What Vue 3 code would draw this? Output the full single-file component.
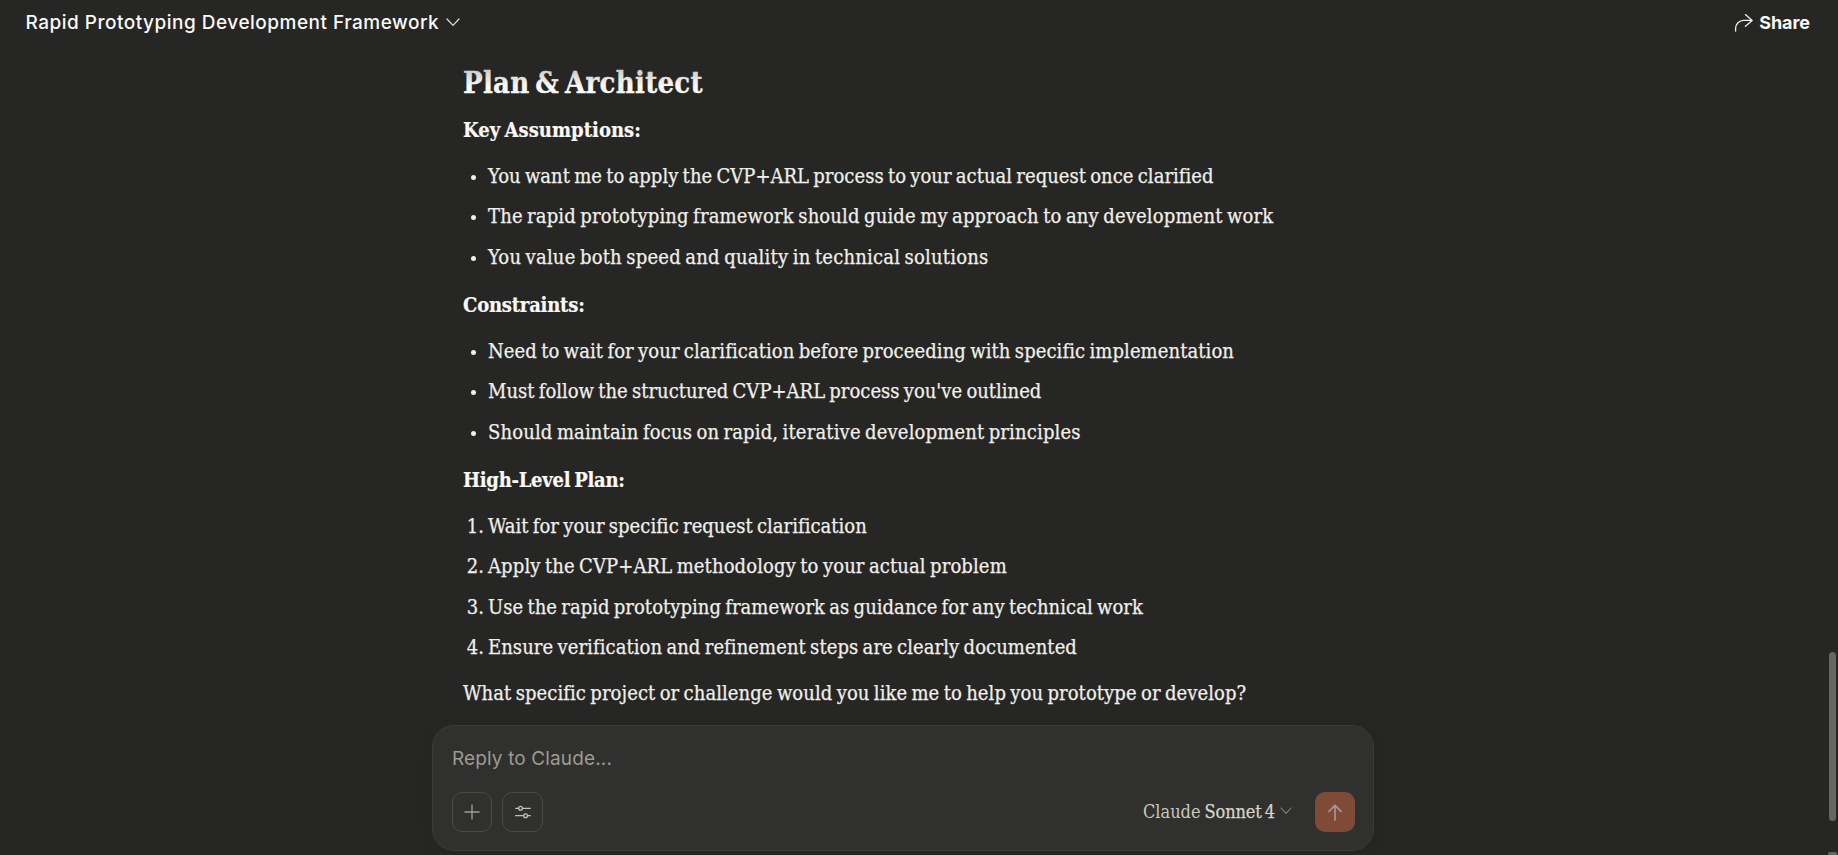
<script setup>
const sections = [
  {
    title: 'Key Assumptions:', tone: 't1', tag: 'ul',
    items: [
      ['You want me to apply the CVP+ARL process to your actual request once clarified', 'k3'],
      ['The rapid prototyping framework should guide my approach to any development work', 'k15'],
      ['You value both speed and quality in technical solutions', 'k20'],
    ],
  },
  {
    title: 'Constraints:', tone: 't2', tag: 'ul',
    items: [
      ['Need to wait for your clarification before proceeding with specific implementation', 'k8'],
      ["Must follow the structured CVP+ARL process you've outlined", 'k0'],
      ['Should maintain focus on rapid, iterative development principles', 'k15'],
    ],
  },
  {
    title: 'High-Level Plan:', tone: 't3', tag: 'ol',
    items: [
      ['Wait for your specific request clarification', 'k3'],
      ['Apply the CVP+ARL methodology to your actual problem', 'k12'],
      ['Use the rapid prototyping framework as guidance for any technical work', 'k4'],
      ['Ensure verification and refinement steps are clearly documented', 'k7'],
    ],
  },
]
</script>

<template>
  <div class="page">
    <header class="top">
      <button class="title">
        <span>Rapid Prototyping Development Framework</span>
        <svg width="14" height="9" viewBox="0 0 14 9"><path d="M1 1l6 6.4L13 1" fill="none" stroke="#dddcd6" stroke-width="1.3" stroke-linecap="round" /></svg>
      </button>
      <button class="share">
        <svg width="20" height="20" viewBox="0 0 20 20" fill="none" stroke="#f2f1ec" stroke-width="1.3" stroke-linecap="round" stroke-linejoin="round">
          <path d="M1.6 18v-2.6a8 8 0 0 1 8-8H18M11.4 1.6l6.8 5.8-6.8 5.9" />
        </svg>
        <span>Share</span>
      </button>
    </header>

    <main class="thread">
      <h2>Plan &amp; Architect</h2>
      <section v-for="s in sections" :key="s.title">
        <h3 :class="s.tone">{{ s.title }}</h3>
        <component :is="s.tag" class="list">
          <li v-for="(item, i) in s.items" :key="i">
            <span class="mark"><template v-if="s.tag === 'ol'">{{ i + 1 }}.</template><i v-else /></span>
            <span class="line" :class="item[1]">{{ item[0] }}</span>
          </li>
        </component>
      </section>
      <p class="ask line k8">What specific project or challenge would you like me to help you prototype or develop?</p>
    </main>

    <div class="composer">
      <div class="placeholder">Reply to Claude...</div>
      <div class="tools">
        <button class="tool">
          <svg width="16" height="16" viewBox="0 0 16 16"><path d="M8 .5v15M.5 8h15" stroke="#9f9d95" stroke-width="1.3" fill="none" /></svg>
        </button>
        <button class="tool">
          <svg width="16" height="14" viewBox="0 0 16 14" fill="none" stroke="#c2c0b6" stroke-width="1.3" stroke-linecap="round">
            <path d="M.7 3.3h2.9M7.4 3.3h7.9M.7 10.7h8M12.5 10.7h2.8" />
            <circle cx="5.5" cy="3.3" r="1.9" /><circle cx="10.6" cy="10.7" r="1.9" />
          </svg>
        </button>
        <button class="model">
          <span>Claude</span><span class="name">Sonnet 4</span>
          <svg width="12" height="8" viewBox="0 0 12 8"><path d="M1 1l5 5.4L11 1" fill="none" stroke="#85837c" stroke-width="1.1" stroke-linecap="round" /></svg>
        </button>
        <button class="send">
          <svg width="14" height="17" viewBox="0 0 14 17" fill="none" stroke="#a6968f" stroke-width="1.7" stroke-linecap="round" stroke-linejoin="round"><path d="M7 16V1.3M1 7.3l6-6 6 6" /></svg>
        </button>
      </div>
    </div>

    <div class="scroll" />
    <div class="scroll-next" />
  </div>
</template>

<style>
body { background: #262624; overflow: hidden; }
</style>

<style scoped>
.page { position: relative; height: 855px; overflow: hidden; background: #262624; color: #faf9f5; font-family: "DejaVu Serif Condensed", "DejaVu Serif", serif; font-size: 20px; }
button { display: flex; align-items: center; margin: 0; padding: 0; border: 0; background: none; color: inherit; font: inherit; white-space: nowrap; }
.top { position: relative; display: flex; justify-content: space-between; align-items: center; box-sizing: border-box; height: 52px; padding: 0 28px 7px 25.5px; font-family: Inter, "Liberation Sans", sans-serif; }
.top::after { content: ""; position: absolute; z-index: 1; left: 0; right: 10px; top: 52px; height: 34px; background: linear-gradient(#262624, rgba(38, 38, 36, 0)); opacity: .45; }
.title { gap: 7px; font-size: 19px; font-weight: 500; letter-spacing: .5px; }
.share { gap: 5px; font-size: 18px; font-weight: 700; letter-spacing: -.05px; }

.thread { box-sizing: border-box; width: 860px; margin-left: 463px; height: 673px; }
h2, h3, p, ul, ol { margin: 0; padding: 0; list-style: none; white-space: nowrap; }
h2 { height: 57.8px; line-height: 62.6px; font-size: 29px; letter-spacing: .27px; word-spacing: -3.5px; -webkit-text-stroke: .3px currentColor; }
section { height: 175px; }
section:last-of-type { height: 213.5px; }
h3 { font-size: 20px; line-height: 40.33px; font-weight: 700; word-spacing: -2px; -webkit-text-stroke: .2px currentColor; }
.t1 { letter-spacing: .04px; }
.t2 { letter-spacing: -.2px; }
.t3 { letter-spacing: -.26px; }
.list { margin-top: 5.8px; color: #f0efea; }
li { display: flex; height: 40.33px; line-height: 40.33px; }
.mark { flex: none; width: 21px; margin-right: 4px; display: flex; align-items: center; justify-content: flex-end; letter-spacing: 0; -webkit-text-stroke: .25px currentColor; }
.mark i { width: 5px; height: 5px; margin: 3px 8.5px 0 0; border-radius: 50%; background: #f0efea; }
.line { word-spacing: -1.5px; -webkit-text-stroke: .25px currentColor; }
.ask { line-height: 40.33px; color: #f0efea; }
.k0 { letter-spacing: .01px; }
.k3 { letter-spacing: .03px; }
.k4 { letter-spacing: .04px; }
.k7 { letter-spacing: .07px; }
.k8 { letter-spacing: .082px; }
.k12 { letter-spacing: .12px; }
.k15 { letter-spacing: .152px; }
.k20 { letter-spacing: .205px; }

.composer { box-sizing: border-box; width: 942px; height: 126px; margin-left: 432px; padding: 18px 18px 0 19px; border: 1px solid #3a3a37; border-radius: 22px; background: #30302e; box-shadow: 0 4px 20px rgba(0, 0, 0, .06); }
.placeholder { height: 48px; font: 400 19px/30px Inter, "Liberation Sans", sans-serif; letter-spacing: .13px; color: #9c9a92; }
.tools { display: flex; align-items: center; }
.tool { box-sizing: border-box; width: 40px; height: 40px; margin-right: 10px; justify-content: center; border: 1px solid #4a4a47; border-radius: 10px; }
.tool + .tool { width: 41px; }
.model { margin-left: auto; padding-bottom: 2px; font-size: 18px; color: #c9c7bf; }
.name { margin: 0 5px 0 4px; letter-spacing: -.1px; word-spacing: -2px; color: #d6d4cc; -webkit-text-stroke: .25px currentColor; }
.send { width: 40px; height: 40px; margin-left: 23px; justify-content: center; border-radius: 10px; background: #7f4b37; }

.scroll, .scroll-next { position: absolute; right: 2px; top: 652px; width: 7px; height: 169px; border-radius: 4px; background: #666660; }
.scroll-next { right: 1px; top: 852px; width: 9px; height: 8px; border-radius: 2px; }
</style>
